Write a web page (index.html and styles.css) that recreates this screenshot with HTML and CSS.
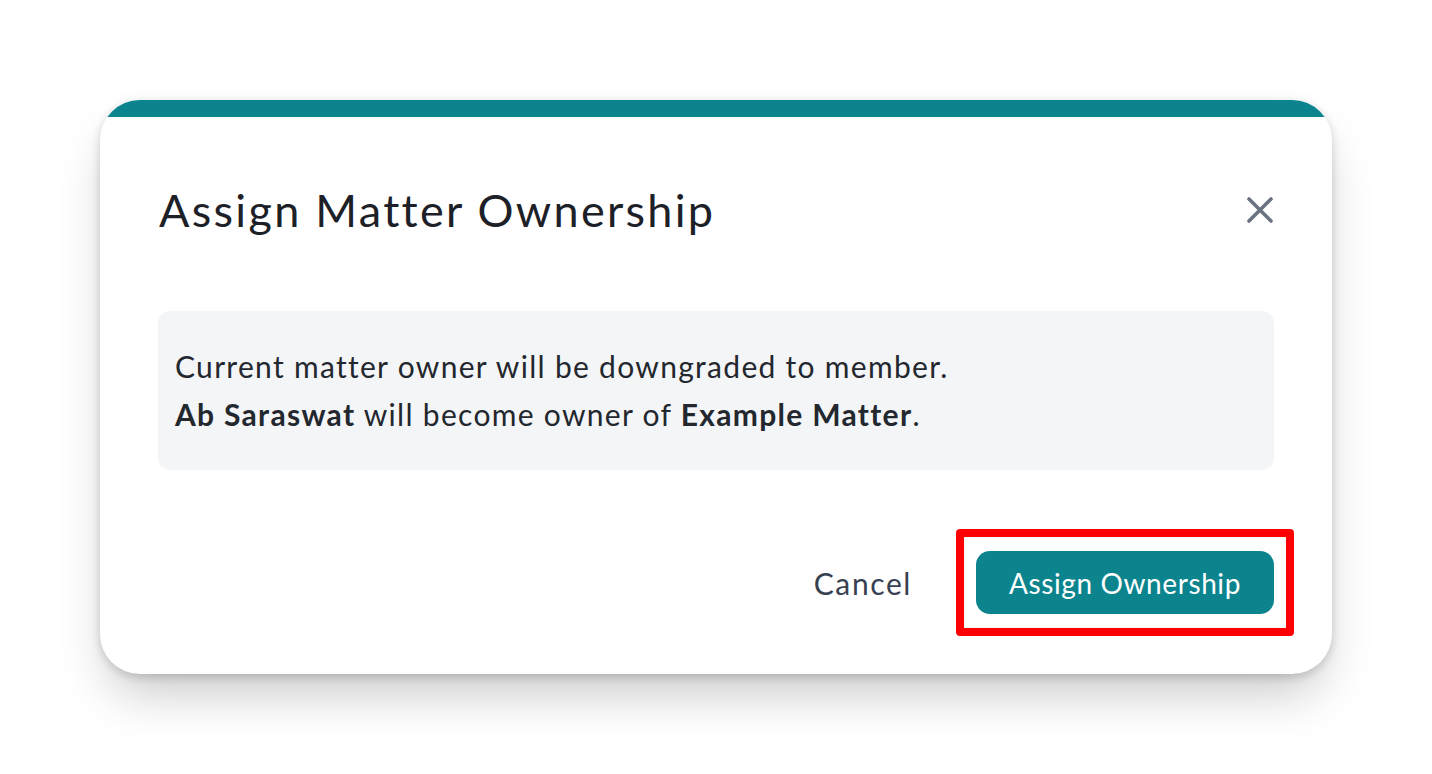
FILE: index.html
```html
<!DOCTYPE html>
<html lang="en">
<head>
<meta charset="utf-8">
<title>Assign Matter Ownership</title>
<link rel="stylesheet" href="styles.css">
</head>
<body>
  <div class="modal" role="dialog" aria-labelledby="modal-title">
    <div class="modal-accent"></div>
    <div class="modal-body">
      <div class="modal-header">
        <h2 class="modal-title" id="modal-title">Assign Matter Ownership</h2>
        <button class="close-btn" aria-label="Close">
          <svg width="26" height="26" viewBox="0 0 26 26" fill="none" stroke="#6b7280" stroke-width="3.6" stroke-linecap="round">
            <path d="M2 2 L24 24 M24 2 L2 24"/>
          </svg>
        </button>
      </div>
      <div class="info-box">
        <p class="info-line">Current matter owner will be downgraded to member.</p>
        <p class="info-line"><strong>Ab Saraswat</strong> will become owner of <strong>Example Matter</strong>.</p>
      </div>
      <div class="modal-actions">
        <button class="btn-cancel">Cancel</button>
        <div class="highlight">
          <button class="btn-primary">Assign Ownership</button>
        </div>
      </div>
    </div>
  </div>
</body>
</html>
```

FILE: styles.css
```css
* { box-sizing: border-box; }

html, body {
  margin: 0;
  background: #ffffff;
}

body {
  width: 1432px;
  height: 774px;
  padding: 100px 100px 0 100px;
  font-family: "Lato", "Noto Sans", sans-serif;
  color: #1f2329;
  overflow: hidden;
}

.modal {
  width: 1232px;
  background: #ffffff;
  border-radius: 40px;
  overflow: hidden;
  display: flex;
  flex-direction: column;
  box-shadow: 0 28px 50px -10px rgba(0, 0, 0, 0.22), 0 4px 10px rgba(0, 0, 0, 0.12), 0 0 12px rgba(0, 0, 0, 0.05);
}

.modal-accent {
  height: 17px;
  background: #0b848e;
}

.modal-body {
  padding: 69px 58px 60px 58px;
  display: flex;
  flex-direction: column;
}

.modal-header {
  height: 48px;
  display: flex;
  align-items: center;
  justify-content: space-between;
}

.modal-title {
  margin: 0 0 0 1px;
  font-size: 45px;
  line-height: 48px;
  font-weight: 400;
  color: #1d2127;
  letter-spacing: 2.3px;
}

.close-btn {
  border: 0;
  background: none;
  padding: 0;
  margin-right: 1px;
  width: 26px;
  height: 26px;
  display: flex;
  cursor: pointer;
}

.info-box {
  margin-top: 77px;
  height: 159px;
  padding: 32px 17px;
  background: #f4f5f7;
  border-radius: 12px;
  font-size: 30px;
  line-height: 47.5px;
  color: #23272e;
}

.info-line {
  margin: 0;
  letter-spacing: 1.3px;
}

.info-line strong {
  font-weight: 700;
}

.modal-actions {
  margin-top: 81px;
  display: flex;
  justify-content: flex-end;
  align-items: center;
  gap: 64px;
}

.btn-cancel {
  border: 0;
  background: none;
  padding: 0;
  font-family: inherit;
  font-size: 30px;
  color: #374151;
  letter-spacing: 1.6px;
  cursor: pointer;
}

.highlight {
  position: relative;
  display: flex;
}

.highlight::after {
  content: "";
  position: absolute;
  top: -22px;
  bottom: -22px;
  left: -20px;
  right: -20px;
  border: 8px solid #ff0000;
  border-radius: 4px;
  box-shadow: inset 0 0 2px rgba(0, 0, 0, 0.12);
  pointer-events: none;
}

.btn-primary {
  height: 63px;
  width: 298px;
  padding: 0;
  border: 0;
  border-radius: 14px;
  background: #0b848e;
  color: #ffffff;
  font-family: inherit;
  font-size: 28px;
  letter-spacing: 0.6px;
  cursor: pointer;
}
```
